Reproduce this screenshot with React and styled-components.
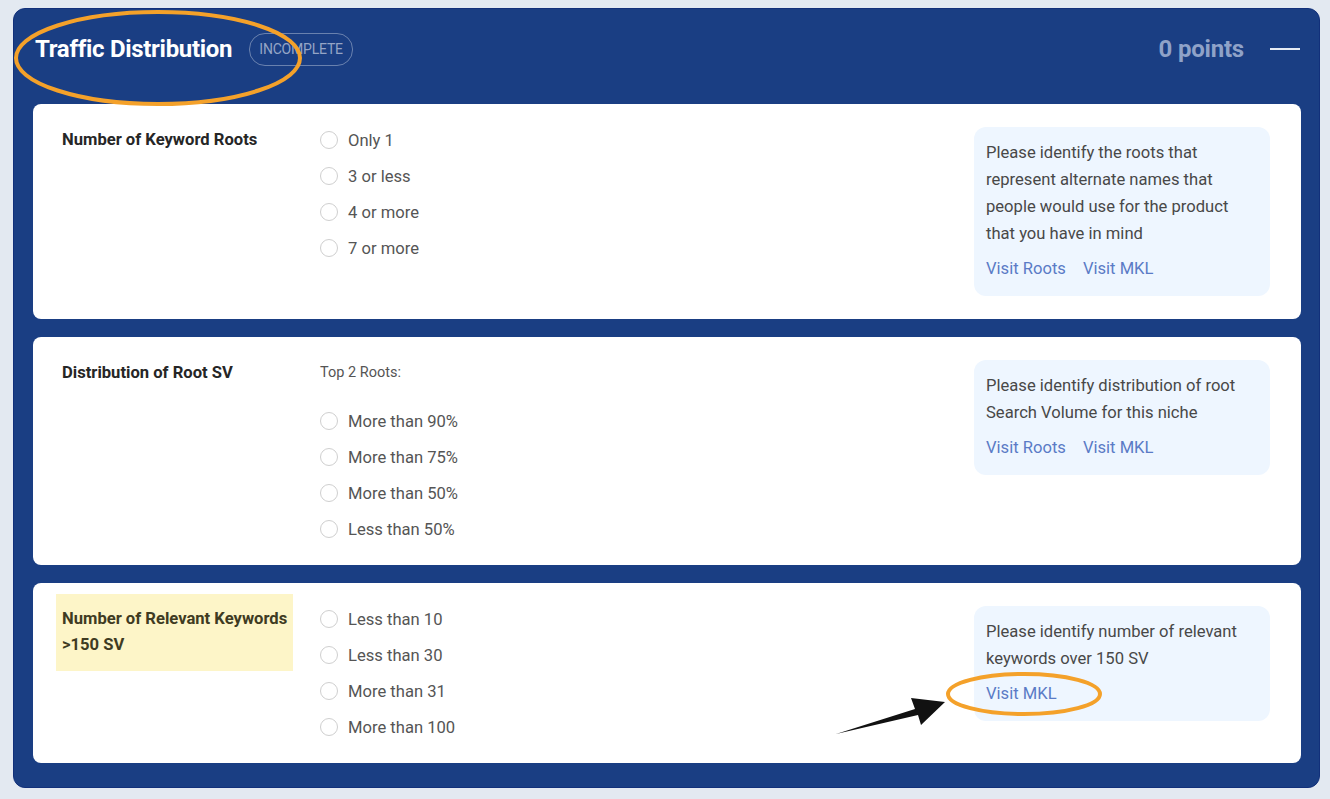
import React from 'react';
import styled, { createGlobalStyle } from 'styled-components';

const GlobalStyle = createGlobalStyle`
  html, body {
    margin: 0;
    padding: 0;
    background: #e3e9f1;
  }
  body {
    padding: 8px 10px 11px 13px;
    font-family: Roboto, 'Liberation Sans', sans-serif;
  }
`;

const Panel = styled.section`
  position: relative;
  background: #1a3e83;
  border: 1px solid #12307a;
  border-radius: 12px;
  padding: 19px 18px 24px 19px;
`;

const Header = styled.div`
  display: flex;
  align-items: center;
  height: 42px;
  margin-bottom: 34px;
  padding-left: 2px;
`;

const Title = styled.h2`
  margin: 0;
  color: #fff;
  font-size: 24px;
  font-weight: 700;
  letter-spacing: -0.3px;
`;

const Badge = styled.span`
  margin-left: 17px;
  height: 31px;
  padding: 0 9px;
  display: inline-flex;
  align-items: center;
  border: 1px solid rgba(255, 255, 255, 0.35);
  border-radius: 16px;
  color: #95a5c6;
  font-size: 14px;
  letter-spacing: -0.2px;
  text-transform: uppercase;
`;

const Points = styled.span`
  margin-left: auto;
  color: #8fa2c8;
  font-size: 24px;
  font-weight: 700;
  letter-spacing: -0.2px;
`;

const Collapse = styled.span`
  width: 30px;
  height: 2px;
  margin: 0 1px 0 26px;
  background: #e6ebf4;
`;

const Cards = styled.div`
  display: flex;
  flex-direction: column;
  gap: 18px;
`;

const Card = styled.div`
  display: grid;
  grid-template-columns: 237px 1fr 296px;
  column-gap: 27px;
  align-items: start;
  background: #fff;
  border-radius: 8px;
  padding: 23px 31px 23px 23px;
`;

const Label = styled.div`
  color: ${p => (p.$highlight ? '#3f3b22' : '#262626')};
  font-size: 16.6px;
  font-weight: 700;
  line-height: 26px;
  white-space: nowrap;
  padding: 0 6px;
  margin: ${p => (p.$highlight ? '-12px 0' : '0')};
  padding-top: ${p => (p.$highlight ? '12px' : '0')};
  padding-bottom: ${p => (p.$highlight ? '13px' : '0')};
  background: ${p => (p.$highlight ? '#fdf5c8' : 'transparent')};
`;

const Options = styled.div`
  display: flex;
  flex-direction: column;
  gap: 10px;
`;

const Caption = styled.div`
  color: #555;
  font-size: 14.5px;
  line-height: 26px;
  margin-bottom: 12px;
`;

const Option = styled.label`
  display: flex;
  align-items: center;
  gap: 10px;
  height: 26px;
  color: #555;
  font-size: 16.6px;
`;

const Radio = styled.span`
  width: 18px;
  height: 18px;
  box-sizing: border-box;
  border: 1.5px solid #cfcfcf;
  border-radius: 50%;
  background: #fff;
`;

const Info = styled.div`
  background: #eef6ff;
  border-radius: 12px;
  padding: 12px 12px 14px;
  color: #484848;
  font-size: 16.6px;
  line-height: 27px;
`;

const Links = styled.div`
  display: flex;
  gap: 17px;
  margin-top: 8px;
`;

const Link = styled.a`
  color: #5a7bc6;
  text-decoration: none;
  cursor: pointer;
`;

const Overlay = styled.svg`
  position: absolute;
  left: -13px;
  top: -8px;
  width: 1330px;
  height: 799px;
  pointer-events: none;
  overflow: visible;
`;

const sections = [
  {
    label: 'Number of Keyword Roots',
    options: ['Only 1', '3 or less', '4 or more', '7 or more'],
    info: 'Please identify the roots that represent alternate names that people would use for the product that you have in mind',
    links: ['Visit Roots', 'Visit MKL'],
  },
  {
    label: 'Distribution of Root SV',
    caption: 'Top 2 Roots:',
    options: ['More than 90%', 'More than 75%', 'More than 50%', 'Less than 50%'],
    info: 'Please identify distribution of root Search Volume for this niche',
    links: ['Visit Roots', 'Visit MKL'],
  },
  {
    label: (
      <>
        Number of Relevant Keywords
        <br />
        &gt;150 SV
      </>
    ),
    highlight: true,
    options: ['Less than 10', 'Less than 30', 'More than 31', 'More than 100'],
    info: 'Please identify number of relevant keywords over 150 SV',
    links: ['Visit MKL'],
  },
];

const App = () => {
  return (
    <>
      <GlobalStyle />
      <Panel>
        <Header>
          <Title>Traffic Distribution</Title>
          <Badge>Incomplete</Badge>
          <Points>0 points</Points>
          <Collapse />
        </Header>
        <Cards>
          {sections.map((s, i) => (
            <Card key={i}>
              <Label $highlight={s.highlight}>{s.label}</Label>
              <Options>
                {s.caption && <Caption>{s.caption}</Caption>}
                {s.options.map(o => (
                  <Option key={o}>
                    <Radio />
                    {o}
                  </Option>
                ))}
              </Options>
              <Info>
                {s.info}
                <Links>
                  {s.links.map(l => (
                    <Link key={l}>{l}</Link>
                  ))}
                </Links>
              </Info>
            </Card>
          ))}
        </Cards>
        {/* annotation marks drawn over the screenshot */}
        <Overlay viewBox="0 0 1330 799">
          <ellipse cx="157" cy="57" rx="142" ry="46" fill="none" stroke="#f4a12a" strokeWidth="4" />
          <ellipse cx="1023" cy="693" rx="76" ry="20" fill="none" stroke="#f4a12a" strokeWidth="4" />
          <polygon points="835,733 914,708 910,697 944,701 920,724 917,714" fill="#111" />
        </Overlay>
      </Panel>
    </>
  );
};

export default App;
